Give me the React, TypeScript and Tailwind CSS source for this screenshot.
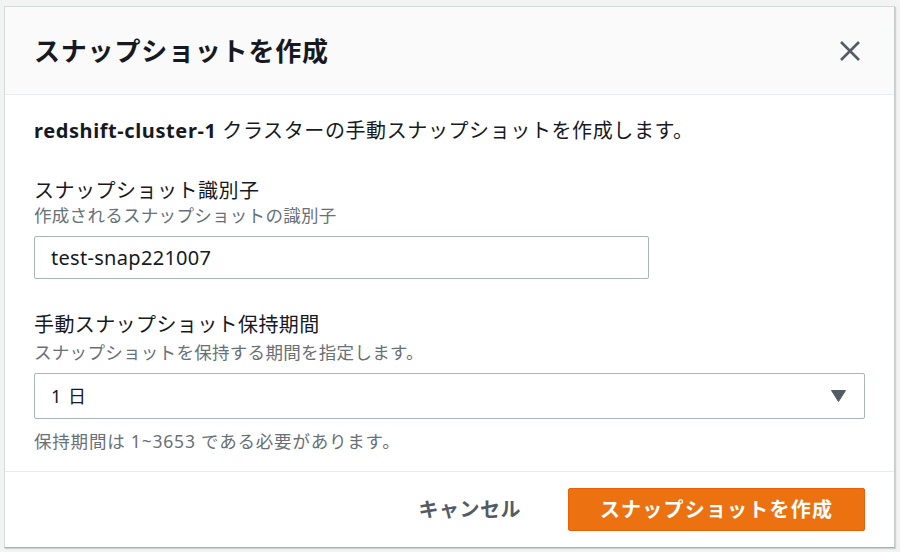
export default function App() {
    return (
        <div
            className="w-[900px] h-[552px] bg-[#f2f3f3] pt-[6px] pl-[4px]"
            style={{ fontFamily: '"Noto Sans", "Noto Sans CJK JP", sans-serif' }}
        >
            <div className="w-[891px] h-[542px] bg-white border border-[#d5dbdb] border-r-[#c6cccc] border-b-[#aab1b1] shadow-[1px_1px_1px_rgba(0,28,36,0.15)] flex flex-col">
                {/* header */}
                <div className="h-[88px] shrink-0 bg-[#fafafa] border-b border-[#eaeded] flex items-center justify-between pl-[29px] pr-[32px]">
                    <h1 className="text-[26px] font-bold text-[#16191f] leading-none tracking-[0.8px]">
                        スナップショットを作成
                    </h1>
                    <button type="button" className="w-[24px] h-[24px] flex items-center justify-center">
                        <svg width="22" height="22" viewBox="0 0 22 22" fill="none" stroke="#545b64" strokeWidth={2.6}>
                            <path d="M2 2L20 20M20 2L2 20" />
                        </svg>
                    </button>
                </div>

                {/* body */}
                <div className="flex-1 pt-[23px] px-[29px] border-b border-[#eaeded]">
                    <p className="text-[20px] leading-[26px] text-[#16191f] tracking-[0.6px]">
                        <span className="font-bold">redshift-cluster-1</span> クラスターの手動スナップショットを作成します。
                    </p>

                    <div className="mt-[34px]">
                        <div className="text-[20px] leading-[26px] text-[#16191f] tracking-[0.5px]">スナップショット識別子</div>
                        <div className="text-[17.5px] leading-[22px] text-[#687078] tracking-[0.3px]">作成されるスナップショットの識別子</div>
                        <div className="mt-[10px] w-[615px] h-[43px] border border-[#aab7b8] rounded-[2px] flex items-center px-[16px]">
                            <span className="text-[20px] text-[#16191f] tracking-[0.3px]">test-snap221007</span>
                        </div>
                    </div>

                    <div className="mt-[33px]">
                        <div className="text-[20px] leading-[26px] text-[#16191f] tracking-[0.4px]">手動スナップショット保持期間</div>
                        <div className="mt-[3px] text-[17.5px] leading-[22px] text-[#687078] tracking-[0.3px]">スナップショットを保持する期間を指定します。</div>
                        <div className="mt-[10px] h-[46px] border border-[#aab7b8] rounded-[2px] flex items-center justify-between pl-[16px] pr-[18px]">
                            <span className="text-[18px] text-[#16191f] tracking-[1px]">1 日</span>
                            <svg width="15" height="12" viewBox="0 0 15 12">
                                <path d="M0.5 0.5H14.5L7.5 11.5Z" fill="#545b64" stroke="#545b64" strokeLinejoin="round" />
                            </svg>
                        </div>
                        <div className="mt-[11px] text-[17.5px] leading-[22px] text-[#687078] tracking-[0.8px]">保持期間は 1~3653 である必要があります。</div>
                    </div>
                </div>

                {/* footer */}
                <div className="h-[75px] shrink-0 flex items-center justify-end gap-[47px] pr-[29px]">
                    <button type="button" className="text-[20px] font-semibold text-[#545b64] tracking-[0.5px]">キャンセル</button>
                    <button
                        type="button"
                        className="w-[297px] h-[43px] bg-[#ec7211] border border-[#eb5f07] rounded-[2px] text-[20px] font-bold text-white tracking-[1.2px]"
                    >
                        スナップショットを作成
                    </button>
                </div>
            </div>
        </div>
    )
}
